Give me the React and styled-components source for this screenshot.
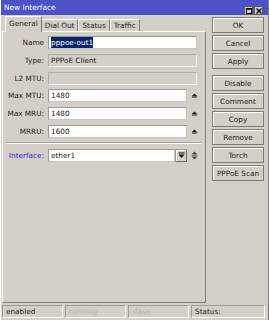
import React from 'react';
import styled, { createGlobalStyle } from 'styled-components';

const GlobalStyle = createGlobalStyle`
    html, body {
        margin: 0;
        padding: 0;
        background: #d4d0c8;
    }
    * {
        box-sizing: border-box;
    }
`;

const Window = styled.div`
    width: 269px;
    height: 320px;
    display: flex;
    flex-direction: column;
    background: #d4d0c8;
    font-family: "DejaVu Sans", "Liberation Sans", sans-serif;
    font-size: 7.3px;
    color: #1c1c1c;
    border-left: 1px solid #ffffff;
    border-right: 1px solid #808080;
    overflow: hidden;
`;

const TitleBar = styled.div`
    height: 15px;
    flex: none;
    display: flex;
    align-items: center;
    padding: 0 5px 0 3px;
    background: #4b52c6;
    color: #ffffff;
    font-size: 7.4px;
`;

const TitleButtons = styled.div`
    margin-left: auto;
    align-self: flex-end;
    margin-bottom: 0;
    display: flex;
    gap: 1px;
`;

const TitleButton = styled.div`
    width: 9px;
    height: 9px;
    background: #d4d0c8;
    border: 1px solid #5a5a5a;
    display: flex;
    align-items: center;
    justify-content: center;
    color: #000;
`;

const Main = styled.div`
    flex: 1;
    display: flex;
    min-height: 0;
`;

const LeftColumn = styled.div`
    width: 204px;
    margin-left: 1px;
    display: flex;
    flex-direction: column;
`;

const TabRow = styled.div`
    height: 16px;
    display: flex;
    align-items: flex-end;
    padding-left: 4px;
`;

const Tab = styled.div`
    height: ${p => (p.$active ? '16px' : '12px')};
    padding: 0 3px ${p => (p.$active ? '2px' : '0')};
    margin: 0 ${p => (p.$active ? '-1px' : '0')} ${p => (p.$active ? '-1px' : '0')};
    display: flex;
    align-items: center;
    background: #d4d0c8;
    border: 1px solid;
    border-color: #ffffff #7a7a7a transparent #ffffff;
    border-bottom: none;
    position: relative;
    z-index: ${p => (p.$active ? 1 : 0)};
`;

const Panel = styled.div`
    flex: 1;
    border: 1px solid;
    border-color: #ffffff #808080 #808080 #ffffff;
    padding: 4px 0 0 0;
    display: flex;
    flex-direction: column;
`;

const Row = styled.div`
    height: 13px;
    display: flex;
    align-items: center;
    margin-bottom: 4.8px;
`;

const Label = styled.div`
    width: 41px;
    margin-right: 4px;
    text-align: right;
    color: ${p => (p.$link ? '#2a2ee0' : '#1c1c1c')};
    white-space: nowrap;
`;

const Field = styled.div`
    width: ${p => p.$w}px;
    height: 13px;
    display: flex;
    align-items: center;
    padding-left: 2px;
    background: ${p => (p.$readonly ? '#d4d0c8' : '#ffffff')};
    border: 1px solid;
    border-color: ${p => (p.$readonly ? '#b3afa7 #f4f2ee #f4f2ee #b3afa7' : '#9d9991 #c9c5bd #c9c5bd #9d9991')};
    white-space: nowrap;
    overflow: hidden;
`;

const Selected = styled.span`
    background: #0a246a;
    color: #ffffff;
    padding: 1px 0;
    line-height: 9px;
`;

const Spin = styled.div`
    width: 14px;
    display: flex;
    justify-content: center;
    align-items: center;
`;

const DropButton = styled.div`
    width: 12px;
    height: 13px;
    display: flex;
    align-items: center;
    justify-content: center;
    background: #d4d0c8;
    border: 1px solid;
    border-color: #9d9991 #6a6a6a #6a6a6a #9d9991;
    box-shadow: inset 1px 1px 0 #ffffff;
`;

const Separator = styled.div`
    height: 2px;
    margin: -0.5px 4px 5px 3px;
    border-top: 1px solid #a8a49c;
    border-bottom: 1px solid #ffffff;
`;

const RightColumn = styled.div`
    width: 52px;
    margin-left: 6px;
    padding-top: 2px;
    display: flex;
    flex-direction: column;
    gap: 2px;
`;

const Button = styled.div`
    height: 16px;
    display: flex;
    align-items: center;
    justify-content: center;
    border: 1px solid #7e7b76;
    box-shadow: inset 1px 1px 0 #ffffff;
    background: #d4d0c8;
    color: #1c1c1c;
    margin-top: ${p => (p.$spaced ? '4px' : '0')};
`;

const StatusBar = styled.div`
    height: 17px;
    flex: none;
    display: flex;
    gap: 2px;
    padding: 2px 3px 2px 1px;
`;

const StatusCell = styled.div`
    width: ${p => p.$w}px;
    flex: ${p => (p.$grow ? 1 : 'none')};
    height: 13px;
    display: flex;
    align-items: center;
    padding-left: 3px;
    border: 1px solid;
    border-color: #a09c94 #ffffff #ffffff #a09c94;
    color: ${p => (p.$dim ? '#b6b2aa' : '#1c1c1c')};
`;

const UpArrow = () => (
    <svg width="7" height="5" viewBox="0 0 7 5">
        <polygon points="0.5,3.5 3.5,0.5 6.5,3.5" fill="#111" />
        <rect x="1" y="4" width="5" height="1" fill="#777" />
    </svg>
);

const UpDown = () => (
    <svg width="7" height="9" viewBox="0 0 7 9">
        <polygon points="0.5,3.5 3.5,0.5 6.5,3.5" fill="#444" />
        <rect x="0.5" y="4" width="6" height="1" fill="#888" />
        <polygon points="0.5,5.5 3.5,8.5 6.5,5.5" fill="#444" />
    </svg>
);

const DownArrow = () => (
    <svg width="7" height="7" viewBox="0 0 7 7">
        <rect x="0.5" y="0.5" width="6" height="1" fill="#111" />
        <polygon points="0.5,2.5 3.5,6 6.5,2.5" fill="#111" />
    </svg>
);

const tabs = ['General', 'Dial Out', 'Status', 'Traffic'];
const buttons = ['OK', 'Cancel', 'Apply', 'Disable', 'Comment', 'Copy', 'Remove', 'Torch', 'PPPoE Scan'];

export default function App() {
    return (
        <>
            <GlobalStyle />
            <Window>
                <TitleBar>
                    New Interface
                    <TitleButtons>
                        <TitleButton>
                            <svg width="6" height="6" viewBox="0 0 6 6">
                                <rect x="0.5" y="0.5" width="5" height="5" fill="none" stroke="#000" />
                                <rect x="0.5" y="0.5" width="5" height="1.2" fill="#000" />
                            </svg>
                        </TitleButton>
                        <TitleButton>
                            <svg width="6" height="6" viewBox="0 0 6 6">
                                <path d="M0.5 0.5 L5.5 5.5 M5.5 0.5 L0.5 5.5" stroke="#000" strokeWidth="1.4" />
                            </svg>
                        </TitleButton>
                    </TitleButtons>
                </TitleBar>
                <Main>
                    <LeftColumn>
                        <TabRow>
                            {tabs.map((t, i) => (
                                <Tab key={t} $active={i === 0}>{t}</Tab>
                            ))}
                        </TabRow>
                        <Panel>
                            <Row>
                                <Label>Name</Label>
                                <Field $w={149}><Selected>pppoe-out1</Selected></Field>
                            </Row>
                            <Row>
                                <Label>Type:</Label>
                                <Field $w={149} $readonly>PPPoE Client</Field>
                            </Row>
                            <Row>
                                <Label>L2 MTU:</Label>
                                <Field $w={149} $readonly />
                            </Row>
                            <Row>
                                <Label>Max MTU:</Label>
                                <Field $w={139}>1480</Field>
                                <Spin><UpArrow /></Spin>
                            </Row>
                            <Row>
                                <Label>Max MRU:</Label>
                                <Field $w={139}>1480</Field>
                                <Spin><UpArrow /></Spin>
                            </Row>
                            <Row>
                                <Label>MRRU:</Label>
                                <Field $w={139}>1600</Field>
                                <Spin><UpArrow /></Spin>
                            </Row>
                            <Separator />
                            <Row>
                                <Label $link>Interface:</Label>
                                <Field $w={127}>ether1</Field>
                                <DropButton><DownArrow /></DropButton>
                                <Spin><UpDown /></Spin>
                            </Row>
                        </Panel>
                    </LeftColumn>
                    <RightColumn>
                        {buttons.map(b => (
                            <Button key={b} $spaced={b === 'Disable'}>{b}</Button>
                        ))}
                    </RightColumn>
                </Main>
                <StatusBar>
                    <StatusCell $w={61}>enabled</StatusCell>
                    <StatusCell $w={61} $dim>running</StatusCell>
                    <StatusCell $w={61} $dim>slave</StatusCell>
                    <StatusCell $grow>Status:</StatusCell>
                </StatusBar>
            </Window>
        </>
    );
}
